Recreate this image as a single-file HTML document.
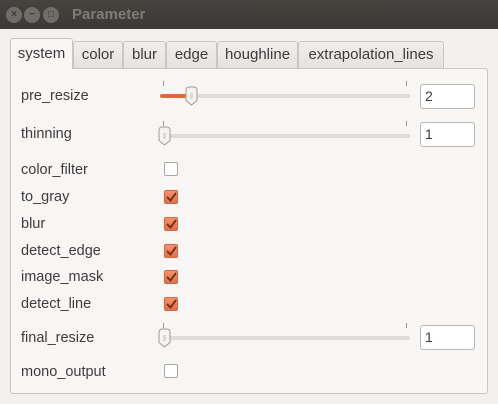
<!DOCTYPE html>
<html><head><style>
*{margin:0;padding:0;box-sizing:border-box}
body{width:498px;height:404px;background:#f2f1f0;font-family:"Liberation Sans","DejaVu Sans",sans-serif;font-size:14px;color:#3c3c3c;position:relative;overflow:hidden}
.tb{position:absolute;left:0;top:0;width:498px;height:29px;background:linear-gradient(#45443f,#3a3935);}
.cb{position:absolute;top:7px;width:16px;height:16px;border-radius:50%;background:#6f6d68;color:#3c3b37;font-size:10px;line-height:16px;text-align:center;font-weight:bold}
.title{position:absolute;left:72px;top:6px;color:#7f7c76;font-weight:bold;font-size:15px}
.tab{position:absolute;top:41px;height:28px;border:1px solid #c9c7c4;border-bottom:none;border-radius:3px 3px 0 0;background:linear-gradient(#efeeec,#e4e2e0);line-height:26px;text-align:center;font-size:15px;color:#3c3c3c}
.tab.a{top:38px;height:31px;background:#f7f6f5;z-index:2;line-height:29px}
.panel{position:absolute;left:10px;top:68px;width:478px;height:326px;border:1px solid #c9c7c4;border-radius:0 3px 3px 3px;background:#f7f6f5}
.lbl{position:absolute;left:21px;font-size:14.5px}
.track{position:absolute;left:160px;width:250px;height:4px;background:#dedcd9;border-radius:2px}
.fill{position:absolute;left:160px;height:4px;background:#e2683d;border-radius:2px}
.tick{position:absolute;width:1px;height:5px;background:#9a9895}
.knob{position:absolute;width:13px;height:20px}
.spin{position:absolute;left:420px;width:55px;height:25px;border:1px solid #b9b7b4;border-radius:3px;background:#fff;padding-left:4px;line-height:23px;font-size:14px}
.chk{position:absolute;left:164px;width:14px;height:14px;border:1px solid #a9a7a4;border-radius:2px;background:#fff}
.chk.on{background:linear-gradient(#f3926c,#e2714a);border-color:#cf6a45}
</style></head><body>
<div class="tb"></div>
<div class="cb" style="left:6px">×</div>
<div class="cb" style="left:24px">−</div>
<div class="cb" style="left:43px">□</div>
<div class="title">Parameter</div>

<div class="tab a" style="left:10px;width:63px">system</div>
<div class="tab" style="left:73px;width:50px">color</div>
<div class="tab" style="left:123px;width:43px">blur</div>
<div class="tab" style="left:166px;width:51px">edge</div>
<div class="tab" style="left:217px;width:81px">houghline</div>
<div class="tab" style="left:298px;width:146px">extrapolation_lines</div>
<div class="panel"></div>

<svg width="0" height="0" style="position:absolute"><defs>
<g id="k"><path d="M1 4a3 3 0 0 1 3-3h5a3 3 0 0 1 3 3v10.5l-5.5 4.5-5.5-4.5z" fill="#f4f3f2" stroke="#9d9b98" stroke-width="1" stroke-linejoin="round"/><path d="M5 8h3M5 10h3M5 12h3" stroke="#b0aeab" stroke-width="0.8"/></g>
<path id="c" d="M3 7l3.5 3.5L12 3" fill="none" stroke="#7a3218" stroke-width="2"/>
</defs></svg>

<div class="lbl" style="top:88px">pre_resize</div>
<div class="tick" style="left:163px;top:81px"></div><div class="tick" style="left:406px;top:81px"></div>
<div class="track" style="top:94px"></div><div class="fill" style="top:94px;width:32px"></div>
<svg class="knob" style="left:185px;top:86px" viewBox="0 0 13 20"><use href="#k"/></svg>
<div class="spin" style="top:84px">2</div>

<div class="lbl" style="top:126px">thinning</div>
<div class="tick" style="left:163px;top:121px"></div><div class="tick" style="left:406px;top:121px"></div>
<div class="track" style="top:134px"></div>
<svg class="knob" style="left:158px;top:126px" viewBox="0 0 13 20"><use href="#k"/></svg>
<div class="spin" style="top:122px">1</div>

<div class="lbl" style="top:162px">color_filter</div><div class="chk" style="top:162px"></div>
<div class="lbl" style="top:189px">to_gray</div><div class="chk on" style="top:190px"><svg width="14" height="14" style="position:absolute;left:-1px;top:-1px"><use href="#c"/></svg></div>
<div class="lbl" style="top:216px">blur</div><div class="chk on" style="top:217px"><svg width="14" height="14" style="position:absolute;left:-1px;top:-1px"><use href="#c"/></svg></div>
<div class="lbl" style="top:243px">detect_edge</div><div class="chk on" style="top:244px"><svg width="14" height="14" style="position:absolute;left:-1px;top:-1px"><use href="#c"/></svg></div>
<div class="lbl" style="top:269px">image_mask</div><div class="chk on" style="top:270px"><svg width="14" height="14" style="position:absolute;left:-1px;top:-1px"><use href="#c"/></svg></div>
<div class="lbl" style="top:296px">detect_line</div><div class="chk on" style="top:297px"><svg width="14" height="14" style="position:absolute;left:-1px;top:-1px"><use href="#c"/></svg></div>

<div class="lbl" style="top:330px">final_resize</div>
<div class="tick" style="left:163px;top:323px"></div><div class="tick" style="left:406px;top:323px"></div>
<div class="track" style="top:336px"></div>
<svg class="knob" style="left:158px;top:328px" viewBox="0 0 13 20"><use href="#k"/></svg>
<div class="spin" style="top:325px">1</div>

<div class="lbl" style="top:364px">mono_output</div><div class="chk" style="top:364px"></div>
</body></html>
